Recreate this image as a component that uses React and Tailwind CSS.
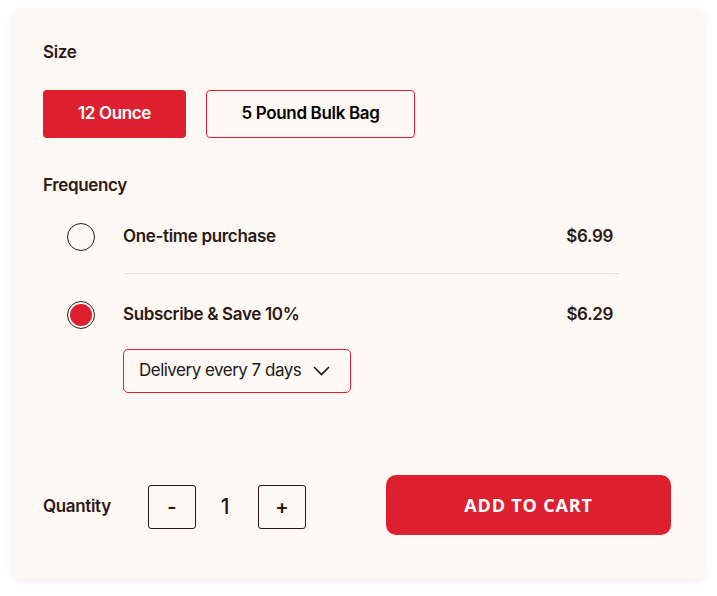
import React, { useState } from 'react';

const ink = 'text-[#2b1a14]';

const Radio = ({ checked }) => (
    <span className="flex size-[28px] shrink-0 items-center justify-center rounded-full border-[1.5px] border-[#2b1a14] bg-[#fdf8f4]">
        {checked && <span className="size-[22px] rounded-full bg-[#de1f30]"></span>}
    </span>
);

const App = () => {
    const [size, setSize] = useState('12oz');
    const [freq, setFreq] = useState('sub');
    const [qty, setQty] = useState(1);

    return (
        <div className="min-h-screen w-full bg-white pt-[9px] pl-[13px]" style={{ fontFamily: 'Inter, "Liberation Sans", sans-serif' }}>
            <div className={`flex h-[570px] w-[691px] flex-col rounded-lg bg-[#fdf8f4] px-[30px] pt-[31px] pb-[44px] shadow-[0_2px_10px_rgba(0,0,0,0.08)] ${ink}`}>
                {/* Taille */}
                <div className="h-[24px] text-[17px] leading-[24px] font-semibold tracking-[-0.02em]">Size</div>
                <div className="mt-[26px] flex gap-[20px]">
                    <button
                        onClick={() => setSize('12oz')}
                        className={`h-[48px] w-[143px] rounded-[4px] text-[17px] font-semibold tracking-[-0.02em] ${size === '12oz' ? 'bg-[#de1f30] text-white' : 'border border-[#de1f30] text-black'}`}
                    >
                        12 Ounce
                    </button>
                    <button
                        onClick={() => setSize('5lb')}
                        className={`h-[48px] w-[209px] rounded-[4px] text-[17px] font-semibold tracking-[-0.02em] ${size === '5lb' ? 'bg-[#de1f30] text-white' : 'border border-[#de1f30] text-black'}`}
                    >
                        5 Pound Bulk Bag
                    </button>
                </div>

                {/* Fréquence */}
                <div className="mt-[35px] h-[24px] text-[17px] leading-[24px] font-semibold tracking-[-0.02em]">Frequency</div>
                <div className="mt-[12px] ml-6 flex h-[56px] w-[546px] cursor-pointer items-center" onClick={() => setFreq('once')}>
                    <Radio checked={freq === 'once'} />
                    <span className="ml-[28px] flex-1 text-[17px] font-semibold tracking-[-0.02em]">One-time purchase</span>
                    <span className="text-[17px] font-semibold tracking-[-0.02em]">$6.99</span>
                </div>
                <div className="mt-2 ml-[81px] h-px w-[495px] bg-[#eddcd6]"></div>
                <div className="mt-[13px] ml-6 flex h-[56px] w-[546px] cursor-pointer items-center" onClick={() => setFreq('sub')}>
                    <Radio checked={freq === 'sub'} />
                    <span className="ml-[28px] flex-1 text-[17px] font-semibold tracking-[-0.02em]">Subscribe &amp; Save 10%</span>
                    <span className="text-[17px] font-semibold tracking-[-0.02em]">$6.29</span>
                </div>
                <button className="mt-[6px] ml-[80px] flex h-[44px] w-[228px] items-center rounded-[5px] border border-[#de1f30] pl-[15px] text-[17px] tracking-[-0.03em] text-[#1a1a1a]">
                    Delivery every 7 days
                    <svg className="ml-[12px]" width="17" height="10" viewBox="0 0 17 10" fill="none" stroke="#1a1a1a" strokeWidth="1.6">
                        <path d="M1 1l7.5 7.5L16 1" />
                    </svg>
                </button>

                {/* Quantité + panier */}
                <div className="mt-auto flex items-center">
                    <span className="w-[105px] pt-[3px] text-[17px] font-semibold tracking-[-0.02em]">Quantity</span>
                    <div className="flex items-center pt-[3px]">
                        <button onClick={() => setQty(Math.max(1, qty - 1))} className="flex h-[44px] w-[48px] items-center justify-center rounded-[3px] border border-[#2b1a14] text-[20px] font-semibold">-</button>
                        <span className="w-[62px] pr-[4px] text-center text-[21px] font-medium">{qty}</span>
                        <button onClick={() => setQty(qty + 1)} className="flex h-[44px] w-[48px] items-center justify-center rounded-[3px] border border-[#2b1a14] text-[20px] font-semibold">+</button>
                    </div>
                    <button className="ml-auto mr-[3px] h-[60px] w-[285px] rounded-[10px] bg-[#de1f30] text-[18px] font-bold tracking-[0.045em] text-white uppercase" style={{ fontFamily: '"Open Sans", sans-serif' }}>
                        Add to cart
                    </button>
                </div>
            </div>
        </div>
    );
};

export default App;
